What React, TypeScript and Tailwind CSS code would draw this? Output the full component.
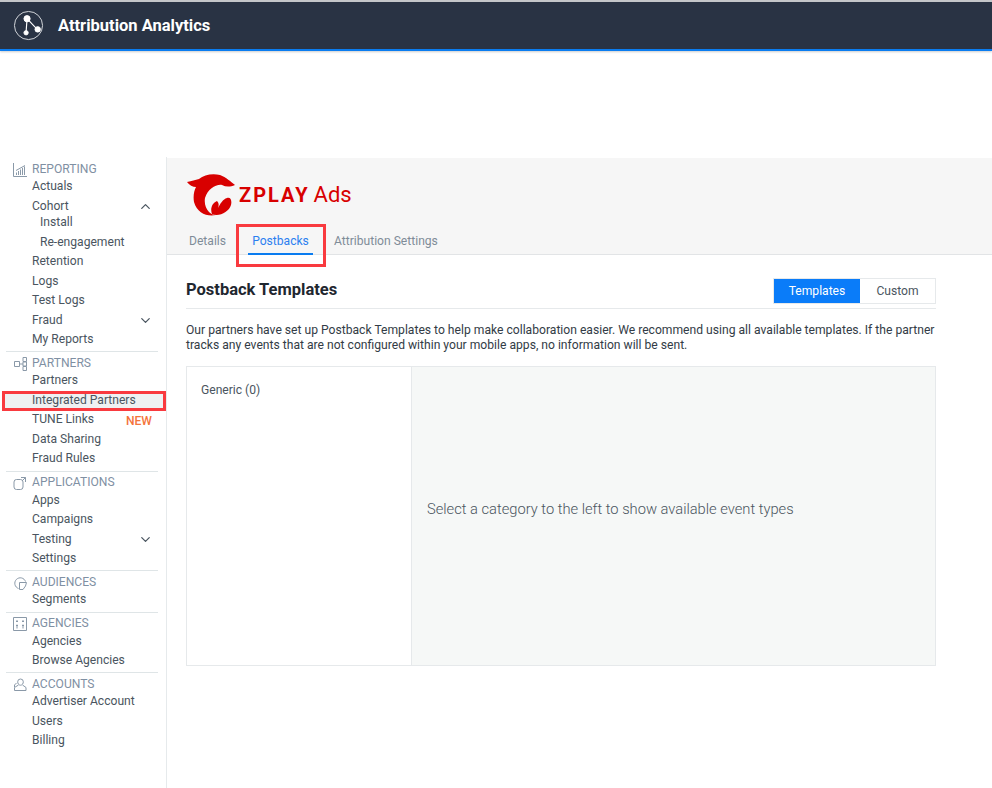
import { ChevronDown, ChevronUp } from 'lucide-react';
import type { ReactNode } from 'react';

interface NavItem {
  label: string;
  h: string;
  sub?: boolean;
  chevron?: 'up' | 'down';
  badge?: string;
  active?: boolean;
}

interface NavSection {
  title: string;
  icon: ReactNode;
  mt: string;
  pt: string;
  items: NavItem[];
}

const ic = 'w-[14px] h-[14px] text-[#8a99a8]';

const sections: NavSection[] = [
  {
    title: 'REPORTING',
    mt: '',
    pt: 'pt-[4px]',
    icon: (
      <svg viewBox="0 0 14 14" className={ic} fill="none" stroke="currentColor" strokeWidth="1">
        <path d="M.5 0v13.500H14M3.500 12V9.500M5.500 12V8M7.500 12V6.500M9.500 12V5M11.500 12V3.500M3 7.500 12 2.500" />
      </svg>
    ),
    items: [
      { label: 'Actuals', h: 'h-[21px]' },
      { label: 'Cohort', h: 'h-[19px]', chevron: 'up' },
      { label: 'Install', h: '-mt-[4px] h-[21px]', sub: true },
      { label: 'Re-engagement', h: 'h-[18px]', sub: true },
      { label: 'Retention', h: 'h-[21px]' },
      { label: 'Logs', h: 'h-[18px]' },
      { label: 'Test Logs', h: 'h-[21px]' },
      { label: 'Fraud', h: 'h-[18px]', chevron: 'down' },
      { label: 'My Reports', h: 'h-[20px]' },
    ],
  },
  {
    title: 'PARTNERS',
    mt: 'mt-[2px]',
    pt: 'pt-[4px]',
    icon: (
      <svg viewBox="0 0 14 14" className={ic} fill="none" stroke="currentColor" strokeWidth="1">
        <path d="M1.500 4.500h5v5h-5zM10 .5h3.500v4H10zM10 5h3.500v4H10zM10 9.500h3.500v4H10zM6.500 7H10" />
      </svg>
    ),
    items: [
      { label: 'Partners', h: 'h-[21px]' },
      { label: 'Integrated Partners', h: 'h-[20px] pb-[2px]', active: true },
      { label: 'TUNE Links', h: '-mt-[2px] h-[21px]', badge: 'NEW' },
      { label: 'Data Sharing', h: 'h-[19px]' },
      { label: 'Fraud Rules', h: 'h-[19px]' },
    ],
  },
  {
    title: 'APPLICATIONS',
    mt: 'mt-[4px]',
    pt: 'pt-[2px]',
    icon: (
      <svg viewBox="0 0 14 14" className={ic} fill="none" stroke="currentColor" strokeWidth="1">
        <rect x="1" y="3.500" width="9" height="10" rx="2.500" />
        <path d="M8 1.500h4.500V6M12.500 1.500 9 5" />
      </svg>
    ),
    items: [
      { label: 'Apps', h: 'h-[21px]' },
      { label: 'Campaigns', h: 'h-[16px]' },
      { label: 'Testing', h: 'mt-[2px] h-[21px]', chevron: 'down' },
      { label: 'Settings', h: 'h-[17px]' },
    ],
  },
  {
    title: 'AUDIENCES',
    mt: 'mt-[4px]',
    pt: 'pt-[4px]',
    icon: (
      <svg viewBox="0 0 14 14" className={ic} fill="none" stroke="currentColor" strokeWidth="1">
        <path d="M12.500 5.500A5.500 5.500 0 1 0 5.500 12.500M6.500 6.500h7l-1 3.500-2.500 3.500H6.500z" />
      </svg>
    ),
    items: [{ label: 'Segments', h: 'h-[20px]' }],
  },
  {
    title: 'AGENCIES',
    mt: 'mt-[4px]',
    pt: 'pt-[2px]',
    icon: (
      <svg viewBox="0 0 14 14" className={ic} fill="none" stroke="currentColor" strokeWidth="1">
        <path d="M.5.5h13v13H.5zM4 3v1.500M3 4.500h2M4 7.500v4M3 8.500h2M10 3v1.500M9 4.500h2M10 7.500v4M9 8.500h2" />
      </svg>
    ),
    items: [
      { label: 'Agencies', h: 'h-[21px]' },
      { label: 'Browse Agencies', h: '-mt-[2px] h-[20px]' },
    ],
  },
  {
    title: 'ACCOUNTS',
    mt: 'mt-[3px]',
    pt: 'pt-[4px]',
    icon: (
      <svg viewBox="0 0 14 14" className={ic} fill="none" stroke="currentColor" strokeWidth="1">
        <path d="M7.500 1a2.800 2.800 0 0 1 2.800 2.800c0 1.500-.8 3.400-2.800 3.400S4.700 5.300 4.700 3.800A2.800 2.800 0 0 1 7.500 1zM5.500 7 1.500 9.500v3h11.500v-3L9.500 7M3.500 5 1.500 7v2" />
      </svg>
    ),
    items: [
      { label: 'Advertiser Account', h: 'h-[20px]' },
      { label: 'Users', h: 'h-[21px]' },
      { label: 'Billing', h: 'h-[16px]' },
    ],
  },
];

function Sidebar() {
  return (
    <aside className="w-[167px] shrink-0 border-r border-[#e6eaec] pt-[2px]">
      {sections.map((section, i) => (
        <div
          key={section.title}
          className={`${section.mt} ml-[6px] mr-[8px] ${i > 0 ? 'border-t border-[#dfe5e7] pt-[1px] -mb-px' : ''}`}>
          <div className={`h-[17px] flex items-center text-[12.100px] text-[#7f90a3] gap-[5px] pl-[7px] ${section.pt}`}>
            {section.icon}
            <span>{section.title}</span>
          </div>
          {section.items.map((item) => (
            <div
              key={item.label}
              className={`${item.h} flex items-center justify-between text-[12.100px] text-[#4a5560] ${
                item.active ? '' : item.sub ? 'pl-[34px]' : 'pl-[26px]'
              } pr-[5px] ${
                item.active
                  ? '-ml-[4px] -mr-[8px] pl-[30px] outline-[3px] -outline-offset-[3px] outline-[#f93a3f] bg-[#eff1f2]'
                  : ''
              }`}>
              <span>{item.label}</span>
              {item.chevron === 'up' && <ChevronUp className="w-[15px] h-[15px] text-[#4a5560]" />}
              {item.chevron === 'down' && <ChevronDown className="w-[15px] h-[15px] text-[#4a5560]" />}
              {item.badge && <span className="text-[#f4743b] font-medium mt-[4px] mr-[1px]">{item.badge}</span>}
            </div>
          ))}
        </div>
      ))}
    </aside>
  );
}

function ZplayLogo() {
  return (
    <div className="flex items-center h-[42px] -ml-[1px]">
      <svg viewBox="0 0 50 42" className="w-[50px] h-[42px] shrink-0">
        <path
          fill="#d80000"
          d="M1 8C6 7 9 6 13 5 18 1 26-1 34 1 40 3 45 8 49 11 44 13 40 13 36 11 30 10 22 15 19 24 18 30 20 35 23 38 25 40 27 41 30 41 21 43 11 39 8 28 7 22 8 17 10 13 7 13 3 11 1 8Z"
        />
        <path
          fill="#d80000"
          d="M26 40C24 35 26 29 31 27 33 29 33 31 32 34 34 30 37 25 41 24 45 23 46 27 45 31 43 38 33 43 26 40Z"
        />
      </svg>
      <span className="ml-[3px] text-[20px] leading-none font-bold text-[#d80000] tracking-[2px]">ZPLAY</span>
      <span className="ml-[4px] text-[22px] leading-none text-[#d80000]">Ads</span>
    </div>
  );
}

export default function App() {
  return (
    <div className="w-[992px] h-[788px] overflow-hidden bg-white font-['Roboto',sans-serif] flex flex-col">
      <header className="h-[51px] shrink-0 bg-[#293344] border-t-[2px] border-t-[#c4c6c9] border-b-[2px] border-b-[#0a7cf0] flex items-center pl-[13px] gap-[14px] shadow-[0_1px_2px_rgba(0,0,0,0.2)]">
        <svg viewBox="0 0 32 32" className="w-[31px] h-[31px]" fill="none" stroke="#fff">
          <circle cx="16" cy="16" r="14.500" strokeWidth="1" stroke="#d5d8dc" />
          <path d="M14.500 9 13.500 23M14.500 9 25 20" strokeWidth="1.200" />
          <circle cx="14.500" cy="9" r="3.200" fill="#fff" />
          <circle cx="13.500" cy="23.500" r="2.200" fill="#fff" />
          <circle cx="25.500" cy="20" r="2.800" fill="#fff" />
        </svg>
        <span className="text-[16.500px] font-bold text-white mt-[2px]">Attribution Analytics</span>
      </header>

      <div className="flex flex-1 mt-[106px] min-h-0">
        <Sidebar />
        <main className="flex-1 min-w-0">
          <div className="h-[97px] bg-[#f6f6f6] border-b border-[#e2e4e6] pl-[20px] pt-[16px] mt-px">
            <ZplayLogo />
            <div className="flex mt-[8px] text-[12.100px] text-[#7f8c98] pl-[2px]">
              <span className="pt-[8px]">Details</span>
              <div className="relative ml-[10px] w-[90px] h-[43px] border-[3px] border-[#f93a3f] pl-[9px]">
                <div className="h-[28px] w-[65px] pt-[5px] text-center text-[#2b7ff0] border-b-2 border-[#0a7cf0]">
                  Postbacks
                </div>
              </div>
              <span className="pt-[8px] ml-[8px]">Attribution Settings</span>
            </div>
          </div>

          <div className="ml-[19px] w-[750px]">
            <div className="h-[54px] flex items-end justify-between border-b border-[#e6e9eb] pb-[4px]">
              <h1 className="text-[16.500px] font-bold text-[#1f2730] mb-[1px]">Postback Templates</h1>
              <div className="flex h-[26px] border border-[#e6e9eb] text-[12.100px]">
                <span className="w-[86px] bg-[#0a7cf9] text-white flex items-center justify-center">Templates</span>
                <span className="w-[75px] text-[#4a5560] flex items-center justify-center">Custom</span>
              </div>
            </div>
            <p className="mt-[14px] text-[12.130px] leading-[15px] text-[#333c46]">
              Our partners have set up Postback Templates to help make collaboration easier. We recommend using all available templates. If the partner tracks any events that are not configured within your mobile apps, no information will be sent.
            </p>
            <div className="mt-[13px] h-[300px] flex border border-[#e6e9eb]">
              <div className="w-[225px] border-r border-[#e6e9eb] pl-[14px] pt-[14px] text-[12.100px] text-[#4a5560]">
                Generic (0)
              </div>
              <div className="flex-1 bg-[#f6f8f7] flex items-center pl-[15px] pb-[14px] text-[14.700px] font-light text-[#4a5560]">
                Select a category to the left to show available event types
              </div>
            </div>
          </div>
        </main>
      </div>
    </div>
  );
}
